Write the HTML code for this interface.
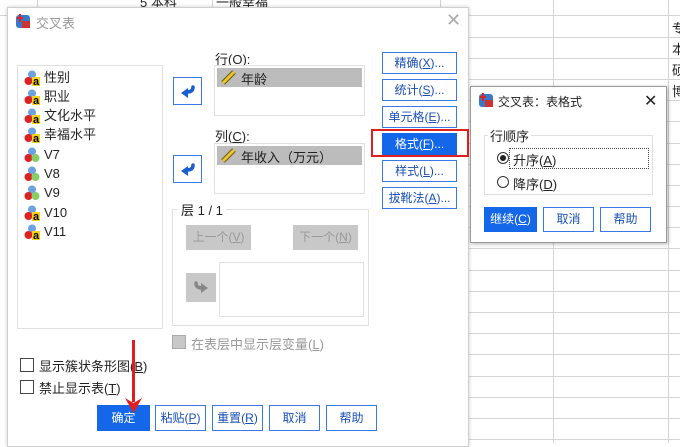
<!DOCTYPE html>
<html><head><meta charset="utf-8"><style>
*{box-sizing:border-box;margin:0;padding:0}
body{width:680px;height:443px;overflow:hidden;position:relative;background:#fff;font-family:"Liberation Sans","Noto Sans CJK SC",sans-serif;font-size:12px;color:#222}
.a{position:absolute}
.hl{position:absolute;height:1px;background:#d4d4d4}
.vl{position:absolute;width:1px;background:#d4d4d4}
.btn{position:absolute;border:1px solid #3b78e7;background:#fff;color:#1a4fb5;text-align:center;font-size:12px}
.btnp{position:absolute;background:#1367e8;color:#fff;text-align:center;font-size:12px}
.gb{position:absolute;background:#c8c8c8;color:#999;text-align:center;font-size:12px}
.box{position:absolute;border:1px solid #e0e0e0;background:#fff}
.it{position:absolute;left:6px;height:18px;line-height:18px;font-size:13px}
.ic{position:absolute;left:0;top:1px;width:16px;height:16px}
.cb{position:absolute;width:14px;height:14px;border:1px solid #444;background:#fff}
u{text-decoration:underline}
</style></head><body>
<!-- spreadsheet background -->
<div class="vl" style="left:440px;top:0;height:8px"></div>
<div class="vl" style="left:553px;top:0;height:443px"></div>
<div class="vl" style="left:668px;top:0;height:443px"></div>
<div class="vl" style="left:37px;top:0;height:8px"></div>
<div class="vl" style="left:212px;top:0;height:8px"></div>
<div class="hl" style="left:0;top:15px;width:8px"></div>
<div class="hl" style="left:468px;top:15px;width:212px"></div>
<div class="hl" style="left:468px;top:37px;width:212px"></div>
<div class="hl" style="left:468px;top:58px;width:212px"></div>
<div class="hl" style="left:468px;top:79px;width:212px"></div>
<div class="hl" style="left:468px;top:100px;width:212px"></div>
<div class="hl" style="left:468px;top:121px;width:212px"></div>
<div class="hl" style="left:468px;top:143px;width:212px"></div>
<div class="hl" style="left:468px;top:164px;width:212px"></div>
<div class="hl" style="left:468px;top:185px;width:212px"></div>
<div class="hl" style="left:468px;top:206px;width:212px"></div>
<div class="hl" style="left:468px;top:227px;width:212px"></div>
<div class="hl" style="left:468px;top:248px;width:212px"></div>
<div class="hl" style="left:468px;top:270px;width:212px"></div>
<div class="hl" style="left:468px;top:291px;width:212px"></div>
<div class="hl" style="left:468px;top:312px;width:212px"></div>
<div class="hl" style="left:468px;top:333px;width:212px"></div>
<div class="hl" style="left:468px;top:354px;width:212px"></div>
<div class="hl" style="left:468px;top:376px;width:212px"></div>
<div class="hl" style="left:468px;top:397px;width:212px"></div>
<div class="hl" style="left:468px;top:418px;width:212px"></div>
<div class="hl" style="left:468px;top:439px;width:212px"></div>
<div class="a" style="left:140px;top:-8px;font-size:13px">5 本科</div>
<div class="a" style="left:216px;top:-8px;font-size:13px">一般幸福</div>
<div class="a" style="left:672px;top:18px;font-size:13px">专</div>
<div class="a" style="left:672px;top:39px;font-size:13px">本</div>
<div class="a" style="left:672px;top:60px;font-size:13px">硕</div>
<div class="a" style="left:672px;top:81px;font-size:13px">博</div>

<!-- main dialog -->
<div class="a" style="left:7px;top:7px;width:462px;height:440px;background:#fff;border:1px solid #cfcfcf;box-shadow:0 0 4px rgba(0,0,0,.2)"></div>
<svg class="a" style="left:15px;top:13px" width="16" height="16"><rect x="1" y="2" width="14" height="13" rx="3" fill="#3a78c8"/><rect x="7" y="8" width="8" height="7" fill="#c33"/><path d="M2 5h6M5 1v8" stroke="#d22" stroke-width="2"/></svg>
<div class="a" style="left:36px;top:13px;color:#999;font-size:13px">交叉表</div>
<div class="a" style="left:446px;top:10px;color:#aaa;font-size:18px">✕</div>

<div class="box" style="left:17px;top:65px;width:146px;height:264px">
<div class="it" style="top:3px"><svg class="ic"><circle cx="8" cy="4.5" r="4" fill="#6fa0e0"/><circle cx="4.5" cy="11" r="4" fill="#d22"/><rect x="8" y="7" width="8" height="9" fill="#f3d21c"/><text x="9" y="15" font-size="11" font-weight="bold" fill="#000">a</text></svg><span style="margin-left:20px">性别</span></div>
<div class="it" style="top:22px"><svg class="ic"><circle cx="8" cy="4.5" r="4" fill="#6fa0e0"/><circle cx="4.5" cy="11" r="4" fill="#d22"/><rect x="8" y="7" width="8" height="9" fill="#f3d21c"/><text x="9" y="15" font-size="11" font-weight="bold" fill="#000">a</text></svg><span style="margin-left:20px">职业</span></div>
<div class="it" style="top:41px"><svg class="ic"><circle cx="8" cy="4.5" r="4" fill="#6fa0e0"/><circle cx="4.5" cy="11" r="4" fill="#d22"/><rect x="8" y="7" width="8" height="9" fill="#f3d21c"/><text x="9" y="15" font-size="11" font-weight="bold" fill="#000">a</text></svg><span style="margin-left:20px">文化水平</span></div>
<div class="it" style="top:60px"><svg class="ic"><circle cx="8" cy="4.5" r="4" fill="#6fa0e0"/><circle cx="4.5" cy="11" r="4" fill="#d22"/><rect x="8" y="7" width="8" height="9" fill="#f3d21c"/><text x="9" y="15" font-size="11" font-weight="bold" fill="#000">a</text></svg><span style="margin-left:20px">幸福水平</span></div>
<div class="it" style="top:80px"><svg class="ic"><circle cx="8" cy="4.5" r="4" fill="#6fa0e0"/><circle cx="4.5" cy="11" r="4" fill="#d22"/><circle cx="11.5" cy="11" r="4" fill="#8c6"/></svg><span style="margin-left:20px">V7</span></div>
<div class="it" style="top:99px"><svg class="ic"><circle cx="8" cy="4.5" r="4" fill="#6fa0e0"/><circle cx="4.5" cy="11" r="4" fill="#d22"/><circle cx="11.5" cy="11" r="4" fill="#8c6"/></svg><span style="margin-left:20px">V8</span></div>
<div class="it" style="top:118px"><svg class="ic"><circle cx="8" cy="4.5" r="4" fill="#6fa0e0"/><circle cx="4.5" cy="11" r="4" fill="#d22"/><circle cx="11.5" cy="11" r="4" fill="#8c6"/></svg><span style="margin-left:20px">V9</span></div>
<div class="it" style="top:138px"><svg class="ic"><circle cx="8" cy="4.5" r="4" fill="#6fa0e0"/><circle cx="4.5" cy="11" r="4" fill="#d22"/><rect x="8" y="7" width="8" height="9" fill="#f3d21c"/><text x="9" y="15" font-size="11" font-weight="bold" fill="#000">a</text></svg><span style="margin-left:20px">V10</span></div>
<div class="it" style="top:157px"><svg class="ic"><circle cx="8" cy="4.5" r="4" fill="#6fa0e0"/><circle cx="4.5" cy="11" r="4" fill="#d22"/><rect x="8" y="7" width="8" height="9" fill="#f3d21c"/><text x="9" y="15" font-size="11" font-weight="bold" fill="#000">a</text></svg><span style="margin-left:20px">V11</span></div>
</div>

<div class="a" style="left:173px;top:77px;width:29px;height:28px;border:1px solid #3b78e7;background:#fff"><svg width="27" height="26"><path d="M19 9q0 5-6 5" stroke="#1a5fd0" stroke-width="3.5" fill="none" stroke-linecap="round"/><path d="M7 15l7-5v10z" fill="#1a5fd0"/></svg></div>
<div class="a" style="left:173px;top:155px;width:29px;height:28px;border:1px solid #3b78e7;background:#fff"><svg width="27" height="26"><path d="M19 9q0 5-6 5" stroke="#1a5fd0" stroke-width="3.5" fill="none" stroke-linecap="round"/><path d="M7 15l7-5v10z" fill="#1a5fd0"/></svg></div>

<div class="a" style="left:215px;top:49px;font-size:13px">行(<u>O</u>):</div>
<div class="box" style="left:214px;top:65px;width:151px;height:51px"><div class="a" style="left:2px;top:2px;width:145px;height:19px;background:#bcbcbc"></div><svg class="a" style="left:6px;top:3px" width="16" height="16"><path d="M2 14L13 3" stroke="#6b5a10" stroke-width="5"/><path d="M2 14L13 3" stroke="#e9c530" stroke-width="3"/></svg><div class="a" style="left:26px;top:3px;font-size:13px">年龄</div></div>
<div class="a" style="left:215px;top:126px;font-size:13px">列(<u>C</u>):</div>
<div class="box" style="left:214px;top:143px;width:151px;height:51px"><div class="a" style="left:2px;top:2px;width:145px;height:19px;background:#bcbcbc"></div><svg class="a" style="left:6px;top:3px" width="16" height="16"><path d="M2 14L13 3" stroke="#6b5a10" stroke-width="5"/><path d="M2 14L13 3" stroke="#e9c530" stroke-width="3"/></svg><div class="a" style="left:26px;top:3px;font-size:13px">年收入（万元）</div></div>

<div class="a" style="left:172px;top:209px;width:197px;height:117px;border:1px solid #e0e0e0"></div>
<div class="a" style="left:178px;top:200px;background:#fff;padding:0 3px;font-size:13px">层 1 / 1</div>
<div class="gb" style="left:186px;top:225px;width:65px;height:25px;line-height:25px">上一个(<u>V</u>)</div>
<div class="gb" style="left:293px;top:225px;width:65px;height:25px;line-height:25px">下一个(<u>N</u>)</div>
<div class="gb" style="left:186px;top:273px;width:30px;height:29px"><svg width="30" height="29"><path d="M10 10q0 5 6 5" stroke="#888" stroke-width="3.5" fill="none" stroke-linecap="round"/><path d="M22 15l-7-5v10z" fill="#888"/></svg></div>
<div class="box" style="left:219px;top:262px;width:145px;height:55px"></div>
<div class="a" style="left:172px;top:335px;width:14px;height:14px;background:#c8c8c8;border:1px solid #aaa"></div>
<div class="a" style="left:191px;top:334px;color:#999;font-size:13px">在表层中显示层变量(<u>L</u>)</div>

<div class="cb" style="left:20px;top:358px"></div>
<div class="a" style="left:39px;top:356px;font-size:13px">显示簇状条形图(<u>B</u>)</div>
<div class="cb" style="left:20px;top:380px"></div>
<div class="a" style="left:39px;top:378px;font-size:13px">禁止显示表(<u>T</u>)</div>

<div class="btnp" style="left:97px;top:405px;width:53px;height:26px;line-height:26px">确定</div>
<div class="btn" style="left:155px;top:405px;width:51px;height:26px;line-height:24px">粘贴(<u>P</u>)</div>
<div class="btn" style="left:212px;top:405px;width:51px;height:26px;line-height:24px">重置(<u>R</u>)</div>
<div class="btn" style="left:269px;top:405px;width:51px;height:26px;line-height:24px">取消</div>
<div class="btn" style="left:326px;top:405px;width:51px;height:26px;line-height:24px">帮助</div>

<div class="btn" style="left:382px;top:52px;width:75px;height:22px;line-height:20px">精确(<u>X</u>)...</div>
<div class="btn" style="left:382px;top:79px;width:75px;height:22px;line-height:20px">统计(<u>S</u>)...</div>
<div class="btn" style="left:382px;top:106px;width:75px;height:22px;line-height:20px">单元格(<u>E</u>)...</div>
<div class="btnp" style="left:382px;top:133px;width:75px;height:22px;line-height:22px">格式(<u>F</u>)...</div>
<div class="a" style="left:371px;top:129px;width:98px;height:28px;border:2px solid #e02020"></div>
<div class="btn" style="left:382px;top:160px;width:75px;height:22px;line-height:20px">样式(<u>L</u>)...</div>
<div class="btn" style="left:382px;top:187px;width:75px;height:22px;line-height:20px">拔靴法(<u>A</u>)...</div>

<!-- red arrow -->
<div class="a" style="left:132px;top:340px;width:3px;height:62px;background:#e02020"></div>
<svg class="a" style="left:125px;top:398px" width="17" height="16"><path d="M0 0L8.5 15L17 0L8.5 5z" fill="#e02020"/></svg>

<!-- sub dialog -->
<div class="a" style="left:470px;top:86px;width:197px;height:157px;background:#fff;border:1px solid #999;box-shadow:1px 1px 4px rgba(0,0,0,.3)"></div>
<svg class="a" style="left:478px;top:92px" width="16" height="16"><rect x="1" y="2" width="14" height="13" rx="3" fill="#3a78c8"/><rect x="7" y="8" width="8" height="7" fill="#c33"/><path d="M2 5h6M5 1v8" stroke="#d22" stroke-width="2"/></svg>
<div class="a" style="left:498px;top:93px;font-size:12px">交叉表：表格式</div>
<div class="a" style="left:644px;top:91px;font-size:16px">✕</div>
<div class="a" style="left:484px;top:135px;width:169px;height:60px;border:1px solid #e0e0e0"></div>
<div class="a" style="left:488px;top:126px;background:#fff;padding:0 2px;font-size:13px">行顺序</div>
<div class="a" style="left:497px;top:152px;width:12px;height:12px;border:1px solid #333;border-radius:50%"><div class="a" style="left:2px;top:2px;width:6px;height:6px;background:#222;border-radius:50%"></div></div>
<div class="a" style="left:509px;top:148px;width:140px;height:21px;border:1px dotted #444"></div>
<div class="a" style="left:513px;top:150px;font-size:13px">升序(<u>A</u>)</div>
<div class="a" style="left:497px;top:176px;width:12px;height:12px;border:1px solid #333;border-radius:50%"></div>
<div class="a" style="left:513px;top:174px;font-size:13px">降序(<u>D</u>)</div>
<div class="btnp" style="left:484px;top:207px;width:53px;height:25px;line-height:25px">继续(<u>C</u>)</div>
<div class="btn" style="left:543px;top:207px;width:51px;height:25px;line-height:23px">取消</div>
<div class="btn" style="left:600px;top:207px;width:51px;height:25px;line-height:23px">帮助</div>
</body></html>
